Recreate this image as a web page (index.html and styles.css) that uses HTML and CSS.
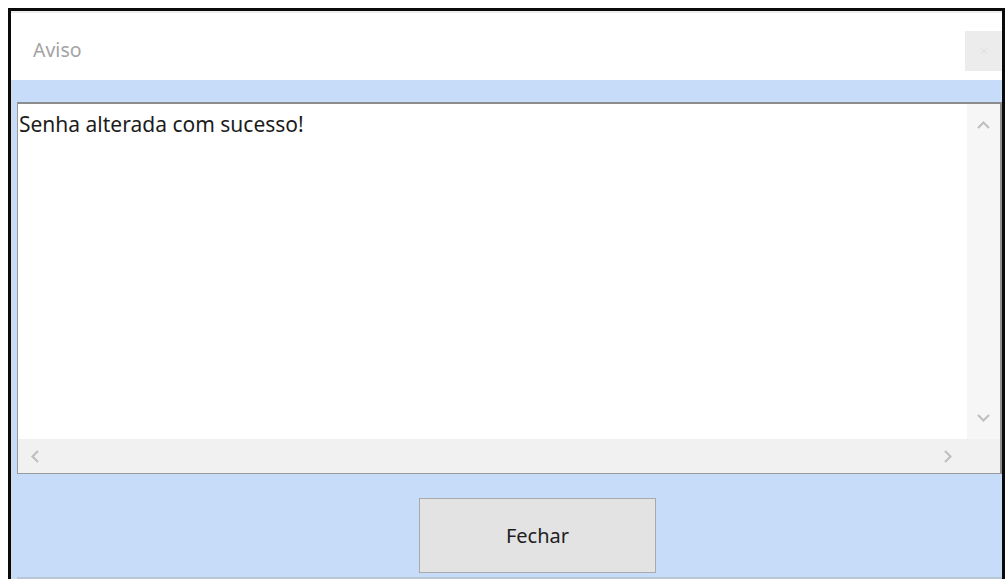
FILE: index.html
```html
<!DOCTYPE html>
<html lang="pt">
<head>
<meta charset="utf-8">
<title>Aviso</title>
<link rel="stylesheet" href="styles.css">
</head>
<body>
<div class="window">
  <div class="titlebar">
    <span class="title">Aviso</span>
    <button class="close" aria-label="Fechar janela">
      <svg width="10" height="10" viewBox="0 0 10 10"><path d="M2 2L8 8M8 2L2 8" stroke="#e2e2e2" stroke-width="1.2"/></svg>
    </button>
  </div>
  <div class="body">
    <div class="textbox">
      <div class="text">Senha alterada com sucesso!</div>
      <div class="vscroll">
        <svg width="13" height="9" viewBox="0 0 13 9"><path d="M1 8L6.5 2.5L12 8" fill="none" stroke="#c0c0c0" stroke-width="2.2"/></svg>
        <svg width="13" height="9" viewBox="0 0 13 9"><path d="M1 1L6.5 6.5L12 1" fill="none" stroke="#c0c0c0" stroke-width="2.2"/></svg>
      </div>
      <div class="hscroll">
        <svg width="9" height="13" viewBox="0 0 9 13"><path d="M8 1L2.5 6.5L8 12" fill="none" stroke="#c0c0c0" stroke-width="2.2"/></svg>
        <svg width="9" height="13" viewBox="0 0 9 13"><path d="M1 1L6.5 6.5L1 12" fill="none" stroke="#c0c0c0" stroke-width="2.2"/></svg>
      </div>
      <div class="corner"></div>
    </div>
    <div class="footer">
      <button class="btn">Fechar</button>
    </div>
  </div>
</div>
</body>
</html>
```
FILE: styles.css
```css
html, body {
  margin: 0;
  padding: 0;
  background: #ffffff;
  height: 579px;
  overflow: hidden;
}

.window {
  margin: 8px 0 0 8px;
  width: 997px;
  height: 571px;
  box-sizing: border-box;
  border: 3px solid #0a0a0a;
  border-bottom: none;
  display: flex;
  flex-direction: column;
  font-family: "Noto Sans", "Open Sans", sans-serif;
}

.titlebar {
  height: 69px;
  flex: none;
  background: #ffffff;
  border-top: 2px solid #ececec;
  box-sizing: border-box;
  display: flex;
  align-items: center;
  justify-content: space-between;
  padding-left: 22px;
}

.title {
  color: #a3a3a3;
  font-size: 19.5px;
  margin-top: 6px;
}

.close {
  width: 37px;
  height: 40px;
  margin-top: 8px;
  border: none;
  background: #ececec;
  display: flex;
  align-items: center;
  justify-content: center;
  padding: 0;
}

.body {
  flex: 1;
  background: #c6dcf9;
  display: flex;
  flex-direction: column;
  padding: 22px 0 0 5px;
  border-left: 1px solid #d7d7d7;
}

.textbox {
  height: 372px;
  box-sizing: border-box;
  border: 1px solid #9a9a9a;
  border-top: 2px solid #8c8c8c;
  border-right: 2px solid #8f8f8f;
  background: #ffffff;
  display: grid;
  grid-template-columns: 1fr 33px;
  grid-template-rows: 1fr 34px;
}

.text {
  padding: 6px 0 0 1px;
  font-size: 21px;
  color: #1c1c1c;
}

.vscroll {
  background: #f6f6f6;
  display: flex;
  flex-direction: column;
  justify-content: space-between;
  align-items: center;
  padding: 16px 0 16px;
}

.hscroll {
  background: #f1f1f1;
  display: flex;
  justify-content: space-between;
  align-items: center;
  padding: 0 14px 0 12px;
}

.corner {
  background: #f1f1f1;
}

.footer {
  flex: 1;
  display: flex;
  justify-content: flex-start;
  align-items: flex-end;
  padding: 0 0 4px 402px;
  border-bottom: 2px solid #b8c6d6;
}

.btn {
  width: 237px;
  height: 75px;
  background: #e3e3e3;
  border: 1px solid #a9a9a9;
  font-family: "Noto Sans", "Open Sans", sans-serif;
  font-size: 20px;
  color: #1e1e1e;
  padding: 0;
}
```
